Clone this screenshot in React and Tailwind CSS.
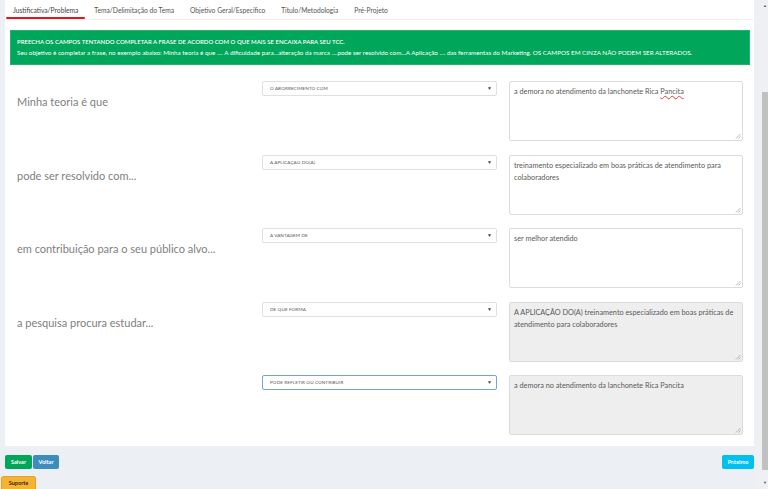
const tabs = [
  "Justificativa/Problema",
  "Tema/Delimitação do Tema",
  "Objetivo Geral/Específico",
  "Título/Metodologia",
  "Pré-Projeto",
];

const rows = [
  {
    label: "Minha teoria é que",
    option: "O ABORRECIMENTO COM",
    text: "a demora no atendimento da lanchonete Rica ",
    typo: "Pancita",
  },
  {
    label: "pode ser resolvido com...",
    option: "A APLICAÇÃO DO(A)",
    text: "treinamento especializado em boas práticas de atendimento para colaboradores",
  },
  {
    label: "em contribuição para o seu público alvo...",
    option: "A VANTAGEM DE",
    text: "ser melhor atendido",
  },
  {
    label: "a pesquisa procura estudar...",
    option: "DE QUE FORMA",
    text: "A APLICAÇÃO DO(A) treinamento especializado em boas práticas de atendimento para colaboradores",
    locked: true,
  },
  {
    label: "",
    option: "PODE REFLETIR OU CONTRIBUIR",
    text: "a demora no atendimento da lanchonete Rica Pancita",
    locked: true,
    focused: true,
  },
];

function ResizeHandle() {
  return (
    <svg
      className="absolute bottom-[1px] right-[1px]"
      width="6"
      height="6"
      viewBox="0 0 6 6"
    >
      <path d="M5.5 1 L1 5.5 M5.5 3.5 L3.5 5.5" stroke="#999" strokeWidth="0.7" />
    </svg>
  );
}

function Row({ row }) {
  return (
    <div className="flex items-start">
      <div className="w-[257px] shrink-0 pl-[12px] pt-[14px] text-[11px] leading-[14px] text-[#808080]">
        {row.label}
      </div>
      <div
        className={`w-[235px] shrink-0 h-[15px] flex items-center justify-between pl-[7px] pr-[4px] rounded-[2px] border bg-white ${
          row.focused ? "border-[#6ea6d8]" : "border-[#e0e0e0]"
        }`}
      >
        <span className="text-[4.6px] text-[#555] tracking-[0.1px]">{row.option}</span>
        <span className="text-[5px] text-[#444] leading-none">▼</span>
      </div>
      <div
        className={`relative shrink-0 ml-[12px] w-[234px] h-[60px] rounded-[2px] border border-[#dcdcdc] pl-[4px] pr-[2px] pt-[4px] text-[7.3px] leading-[12px] text-[#5a5a5a] ${
          row.locked ? "bg-[#eeeeee]" : "bg-white"
        }`}
      >
        {row.text}
        {row.typo && (
          <span className="underline decoration-wavy decoration-[#e04040] decoration-[0.6px] underline-offset-[1px]">
            {row.typo}
          </span>
        )}
        <ResizeHandle />
      </div>
    </div>
  );
}

export default function App() {
  return (
    <div
      className="w-[768px] h-[489px] overflow-hidden flex bg-[#ecf0f5]"
      style={{ fontFamily: "Lato, 'Noto Sans', sans-serif" }}
    >
      <div className="flex-1 flex flex-col">
        <div className="ml-[5px] w-[749px] h-[446px] shrink-0 bg-white flex flex-col">
          <div className="h-[20px] shrink-0 flex items-start border-b border-[#f2f2f2]">
            {tabs.map((tab, i) => (
              <div key={tab} className="relative h-[20px] flex items-center px-[8px]">
                <span className={`text-[6.7px] ${i === 0 ? "text-[#444]" : "text-[#555]"}`}>
                  {tab}
                </span>
                {i === 0 && (
                  <div className="absolute left-[1px] right-[1px] bottom-[1px] h-[2px] rounded-full bg-[#e3141c]" />
                )}
              </div>
            ))}
          </div>

          <div className="mt-[10px] ml-[5px] mr-[4px] h-[35px] shrink-0 bg-[#00a65a] border border-[#25b06d] pl-[6px] flex flex-col justify-center gap-[3px] text-white">
            <p className="text-[6px] leading-[8px] font-semibold">
              PREECHA OS CAMPOS TENTANDO COMPLETAR A FRASE DE ACORDO COM O QUE MAIS SE ENCAIXA PARA SEU TCC.
            </p>
            <p className="text-[6.3px] leading-[8px]">
              Seu objetivo é completar a frase, no exemplo abaixo: Minha teoria é que .... A dificuldade para...alteração da marca ....pode ser resolvido com...A Aplicação .... das ferramentas do Marketing. OS CAMPOS EM CINZA NÃO PODEM SER ALTERADOS.
            </p>
          </div>

          <div className="mt-[16px] flex flex-col gap-[13.5px]">
            {rows.map((row, i) => (
              <Row key={i} row={row} />
            ))}
          </div>
        </div>

        <div className="mt-[9px] h-[14px] shrink-0 flex items-center justify-between pl-[5px]">
          <div className="flex gap-[1px]">
            <button className="h-[14px] w-[27px] rounded-[2px] bg-[#00a65a] text-white text-[5.6px] leading-none font-bold">
              Salvar
            </button>
            <button className="h-[14px] w-[26px] rounded-[2px] bg-[#3c8dbc] text-white text-[5.6px] leading-none font-bold">
              Voltar
            </button>
          </div>
          <button className="h-[14px] w-[32px] rounded-[2px] bg-[#00c0ef] text-white text-[5.6px] leading-none font-bold">
            Próximo
          </button>
        </div>

        <div className="mt-[7px] h-[13px] shrink-0 flex pl-[1px]">
          <button className="h-[13px] w-[35px] rounded-t-[3px] bg-[#f5b335] border border-b-0 border-[#e8a21c] text-[#3a2a00] text-[5.6px] leading-none font-bold">
            Suporte
          </button>
        </div>
      </div>

      <div className="w-[14px] shrink-0 flex flex-col items-end bg-[#eef0f3]">
        <div className="w-[6px] h-[12px] flex items-center justify-center">
          <span className="text-[4px] text-[#555] leading-none">▲</span>
        </div>
        <div className="mt-[80px] w-[6px] h-[378px] bg-[#c1c1c1]" />
        <div className="mt-[8px] w-[6px] h-[10px] flex items-center justify-center">
          <span className="text-[4px] text-[#555] leading-none">▼</span>
        </div>
      </div>
    </div>
  );
}
